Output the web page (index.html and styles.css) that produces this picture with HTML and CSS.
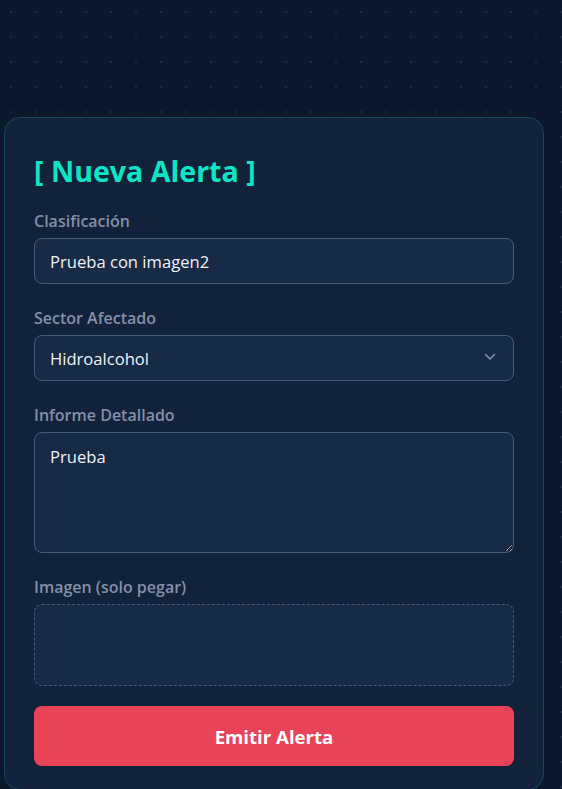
FILE: index.html
```html
<!DOCTYPE html>
<html lang="es">
<head>
<meta charset="utf-8">
<title>Nueva Alerta</title>
<link rel="stylesheet" href="styles.css">
</head>
<body>
<main class="page">
  <section class="card">
    <h2 class="title">[ Nueva Alerta ]</h2>
    <form class="form">
      <div class="field">
        <label class="label" for="clasif">Clasificación</label>
        <input class="control" id="clasif" type="text" value="Prueba con imagen2">
      </div>
      <div class="field">
        <label class="label" for="sector">Sector Afectado</label>
        <div class="select-wrap">
          <select class="control select" id="sector">
            <option>Hidroalcohol</option>
          </select>
          <svg class="chev" width="12" height="8" viewBox="0 0 12 8" aria-hidden="true"><path d="M1.5 1.5 L6 6 L10.5 1.5" fill="none" stroke="#8793a8" stroke-width="1.6" stroke-linecap="round" stroke-linejoin="round"/></svg>
        </div>
      </div>
      <div class="field">
        <label class="label" for="informe">Informe Detallado</label>
        <textarea class="control area" id="informe">Prueba</textarea>
      </div>
      <div class="field field-last">
        <label class="label">Imagen (solo pegar)</label>
        <div class="paste"></div>
      </div>
      <button class="submit" type="button">Emitir Alerta</button>
    </form>
  </section>
</main>
</body>
</html>
```

FILE: styles.css
```css
html, body {
  margin: 0;
  padding: 0;
}
body {
  background-color: #0b172b;
  background-image: radial-gradient(circle at 1px 1px, #1a2a42 1px, transparent 1.2px);
  background-size: 25px 25px;
  background-position: 10px 11px;
  min-height: 789px;
  font-family: "Open Sans", "Noto Sans", Arial, sans-serif;
  color: #e6ecf5;
  overflow: hidden;
}
.page {
  padding: 117px 0 0 4px;
}
.card {
  width: 540px;
  box-sizing: border-box;
  background: #12223a;
  border: 1px solid #17475a;
  border-radius: 16px;
  padding: 29px 29px 22px;
  min-height: 673px;
}
.title {
  margin: 6px 0 0;
  font-size: 28.6px;
  line-height: 36px;
  font-weight: 700;
  color: #0de5c8;
  letter-spacing: 0;
}
.form {
  display: flex;
  flex-direction: column;
  margin-top: 17px;
}
.field {
  display: flex;
  flex-direction: column;
  margin-bottom: 19px;
}
.field-last {
  margin-bottom: 20px;
}
.label {
  font-size: 16px;
  line-height: 30px;
  font-weight: 600;
  color: #8290a8;
  margin-bottom: 2px;
}
.control {
  box-sizing: border-box;
  width: 100%;
  height: 46px;
  margin: 0;
  background: #172a46;
  border: 1px solid #4b5b76;
  border-radius: 8px;
  color: #eef2f8;
  font-family: inherit;
  font-size: 16.6px;
  padding: 0 15px;
  outline: none;
}
.select-wrap {
  position: relative;
}
.select {
  appearance: none;
  -webkit-appearance: none;
}
.chev {
  position: absolute;
  right: 18px;
  top: 18px;
  pointer-events: none;
}
.area {
  height: 121px;
  padding: 12px 15px;
  line-height: 24px;
  resize: vertical;
  color-scheme: dark;
}
.paste {
  box-sizing: border-box;
  height: 82px;
  background: #172a46;
  border: 1px dashed #4b5b76;
  border-radius: 8px;
}
.submit {
  height: 60px;
  border: none;
  border-radius: 8px;
  background: #e84357;
  color: #ffffff;
  font-family: inherit;
  font-size: 18.6px;
  font-weight: 700;
  cursor: pointer;
}
```
